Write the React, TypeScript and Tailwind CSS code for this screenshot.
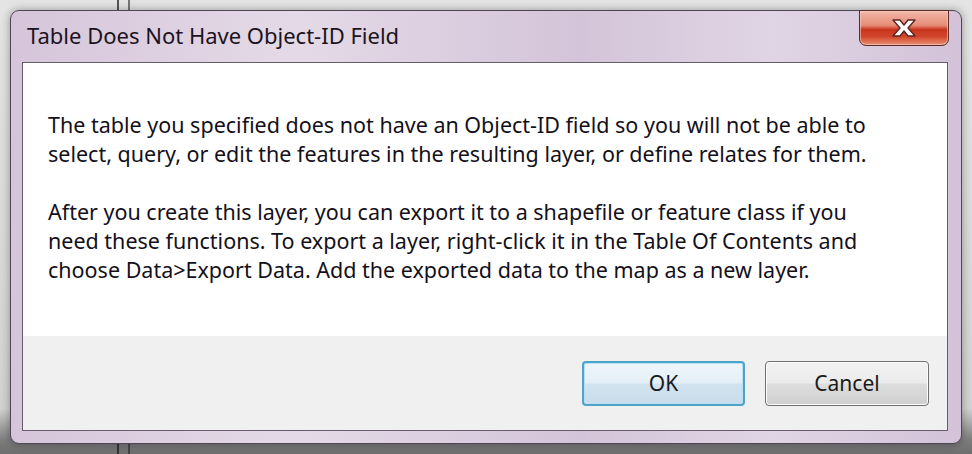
export default function App() {
  const font = { fontFamily: '"Noto Sans", "Open Sans", sans-serif' };

  return (
    <div
      className="relative w-[972px] h-[454px] overflow-hidden bg-[linear-gradient(to_bottom,#e4e4e4_0%,#d2d2d2_90%,#7c7c7c_97%,#6e6e6e_100%)]"
      style={font}
    >
      {/* bits of the window behind */}
      <div className="absolute left-[117px] top-0 h-[12px] w-[2px] bg-[#555]" />
      <div className="absolute left-[128px] top-0 h-[12px] w-[2px] bg-[#777]" />
      <div className="absolute left-[117px] bottom-0 h-[12px] w-[2px] bg-[#333]" />
      <div className="absolute left-[128px] bottom-0 h-[12px] w-[2px] bg-[#444]" />

      {/* dialog window */}
      <div className="absolute left-[10px] top-[10px] w-[952px] h-[434px] rounded-[9px] border border-[#4f4656] bg-[linear-gradient(to_right,#d6c5da_0%,#e4dae7_30%,#d4c4d9_60%,#e0d5e4_80%,#d3c2d8_100%)] shadow-[0_0_8px_rgba(0,0,0,0.35)] flex flex-col">
        {/* title bar */}
        <div className="relative h-[51px] flex items-start">
          <div className="pl-[16px] pt-[9px] text-[22px] leading-[30px] text-[#1b1420]">
            Table Does Not Have Object-ID Field
          </div>
          <div className="absolute right-[12px] -top-px w-[90px] h-[36px] rounded-b-[7px] border border-[#5a2a26] bg-[linear-gradient(to_bottom,#f2b8a8_0%,#e68c78_42%,#c7331c_55%,#d2452c_75%,#e8906e_100%)] shadow-[inset_0_0_0_1px_rgba(255,210,200,0.6)] flex items-center justify-center">
            <svg width="30" height="22" viewBox="0 0 30 22">
              <path
                d="M4 3 L11 3 L15 8 L19 3 L26 3 L19 11 L26 19 L19 19 L15 14 L11 19 L4 19 L11 11 Z"
                fill="#fbfbfb"
                stroke="#5e2622"
                strokeWidth="1.4"
                strokeLinejoin="round"
              />
            </svg>
          </div>
        </div>

        {/* client area */}
        <div className="ml-[11px] mr-[13px] mb-[12px] flex-1 flex flex-col border border-[#665c6c] bg-white">
          <div className="h-[273px] bg-white pl-[25px] pt-[47px] text-[21.5px] leading-[29px] text-[#14101a] whitespace-nowrap">
            <p>The table you specified does not have an Object-ID field so you will not be able to</p>
            <p>select, query, or edit the features in the resulting layer, or define relates for them.</p>
            <p className="mt-[29px]">After you create this layer, you can export it to a shapefile or feature class if you</p>
            <p>need these functions. To export a layer, right-click it in the Table Of Contents and</p>
            <p>choose Data&gt;Export Data. Add the exported data to the map as a new layer.</p>
          </div>
          <div className="flex-1 bg-[#f0f0f0] flex justify-end items-start pt-[25px] pr-[18px] gap-[20px]">
            <button className="w-[163px] h-[45px] rounded-[4px] border-2 border-[#4ea3c9] bg-[linear-gradient(to_bottom,#eef6fb_0%,#e3eff7_48%,#d2e3ef_52%,#c9dceb_100%)] text-[21px] text-[#1a1a1a] shadow-[inset_0_0_0_1px_#b8e0f2]">
              OK
            </button>
            <button className="w-[164px] h-[45px] rounded-[4px] border border-[#707070] bg-[linear-gradient(to_bottom,#f2f2f2_0%,#ebebeb_48%,#dddddd_52%,#cfcfcf_100%)] text-[21px] text-[#1a1a1a] shadow-[inset_0_0_0_1px_#fcfcfc]">
              Cancel
            </button>
          </div>
        </div>
      </div>
    </div>
  );
}
